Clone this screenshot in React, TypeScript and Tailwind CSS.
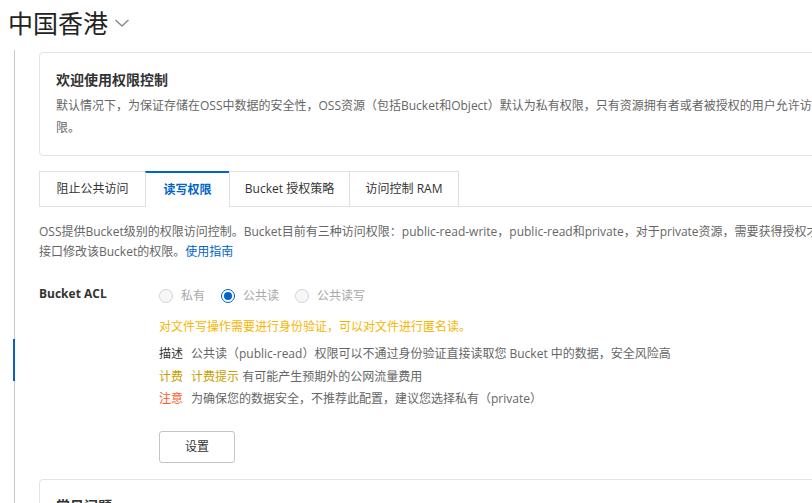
import React from "react";

const TABS = [
  { label: "阻止公共访问", width: "w-[106px]" },
  { label: "读写权限", width: "w-[84px]", active: true },
  { label: "Bucket 授权策略", width: "w-[120px]" },
  { label: "访问控制 RAM", width: "w-[110px]" },
];

const RADIOS = [
  { label: "私有", checked: false },
  { label: "公共读", checked: true },
  { label: "公共读写", checked: false },
];

function Radio({ label, checked }: { label: string; checked: boolean }) {
  return (
    <label className="flex items-center mr-[16px]">
      {checked ? (
        <span className="w-[14px] h-[14px] rounded-full border border-[#0064c8] bg-white flex items-center justify-center">
          <span className="w-[8px] h-[8px] rounded-full bg-[#0064c8]" />
        </span>
      ) : (
        <span className="w-[14px] h-[14px] rounded-full border border-[#cfd3d8] bg-[#f7f7f7]" />
      )}
      <span className="ml-[8px] text-[12px] text-[#a8a8a8]">{label}</span>
    </label>
  );
}

export default function App() {
  return (
    <div
      className="w-[812px] h-[503px] overflow-hidden bg-white flex flex-col text-[#333]"
      style={{ fontFamily: '"Open Sans", "Noto Sans CJK SC", sans-serif' }}
    >
      {/* region title */}
      <div className="h-[50px] shrink-0 flex items-start pl-[8px] pt-[4px]">
        <span
          className="text-[25px] leading-[36px] text-[#222]"
          style={{ fontFamily: '"Noto Sans CJK SC", sans-serif' }}
        >
          中国香港
        </span>
        <svg className="ml-[6px] mt-[14px]" width="16" height="10" viewBox="0 0 16 10">
          <polyline points="1.5,2 8,8 14.5,2" fill="none" stroke="#888" strokeWidth="1.4" />
        </svg>
      </div>

      <div className="flex flex-1 min-h-0">
        {/* side rail */}
        <div className="w-[15px] shrink-0 flex flex-col items-end">
          <div className="w-px h-[289px] bg-[#c5cad1]" />
          <div className="w-[2px] h-[42px] bg-[#0a5fc6]" />
          <div className="w-px flex-1 bg-[#c5cad1]" />
        </div>

        <div className="pl-[24px] w-[1000px] shrink-0">
          {/* intro card */}
          <div className="mt-[2px] border border-[#e3e3e3] rounded-[4px] pt-[16px] pb-[16px] px-[16px]">
            <div className="text-[14px] leading-[22px] font-bold text-[#333]">欢迎使用权限控制</div>
            <div className="mt-[4px] text-[12px] leading-[22px] text-[#666]">
              <div className="whitespace-nowrap">
                默认情况下，为保证存储在OSS中数据的安全性，OSS资源（包括Bucket和Object）默认为私有权限，只有资源拥有者或者被授权的用户允许访问。如果要允许匿名用户访问，请设置相应的权
              </div>
              <div>限。</div>
            </div>
          </div>

          {/* tabs */}
          <div className="mt-[15px] flex border-b border-[#e0e0e0] w-[773px]">
            {TABS.map((t, i) =>
              t.active ? (
                <div
                  key={t.label}
                  className={`${t.width} h-[36px] -mb-px flex items-center justify-center bg-white border-t-2 border-t-[#0064c8] border-l border-l-[#e0e0e0] text-[12px] font-bold text-[#0064c8]`}
                >
                  {t.label}
                </div>
              ) : (
                <div
                  key={t.label}
                  className={`${t.width} h-[35px] flex items-center justify-center border-t border-l border-[#e0e0e0] ${
                    i === TABS.length - 1 ? "border-r" : ""
                  } text-[12px] text-[#333]`}
                >
                  {t.label}
                </div>
              )
            )}
          </div>

          {/* description */}
          <div className="mt-[15px] text-[12px] leading-[20px] text-[#666]">
            <div className="whitespace-nowrap">
              OSS提供Bucket级别的权限访问控制。Bucket目前有三种访问权限：public-read-write，public-read和private，对于private资源，需要获得授权才能访问，您可以通过控制台或API
            </div>
            <div>
              接口修改该Bucket的权限。<span className="text-[#0064c8]">使用指南</span>
            </div>
          </div>

          {/* ACL form */}
          <div className="mt-[22px] flex">
            <div className="w-[120px] shrink-0 text-[12px] leading-[20px] font-bold text-[#333]">Bucket ACL</div>
            <div className="flex flex-col">
              <div className="flex items-center h-[20px] mt-[2px]">
                {RADIOS.map((r) => (
                  <Radio key={r.label} label={r.label} checked={r.checked} />
                ))}
              </div>
              <div className="mt-[11px] text-[12px] leading-[20px] text-[#f7b500]">
                对文件写操作需要进行身份验证，可以对文件进行匿名读。
              </div>
              <div className="mt-[6px] text-[12px] leading-[22.5px] text-[#666]">
                <div>
                  <span className="text-[#333] mr-[8px]">描述</span>
                  公共读（public-read）权限可以不通过身份验证直接读取您 Bucket 中的数据，安全风险高
                </div>
                <div>
                  <span className="text-[#c9a100] mr-[8px]">计费</span>
                  <span className="text-[#c9a100]">计费提示</span> 有可能产生预期外的公网流量费用
                </div>
                <div>
                  <span className="text-[#ff5a1f] mr-[8px]">注意</span>
                  为确保您的数据安全，不推荐此配置，建议您选择私有（private）
                </div>
              </div>
              <button className="mt-[20px] w-[76px] h-[32px] border border-[#c4c4c4] rounded-[3px] bg-white text-[12px] text-[#333]">
                设置
              </button>
            </div>
          </div>

          {/* FAQ card */}
          <div className="mt-[16px] border border-[#e3e3e3] rounded-[4px] pt-[15px] px-[16px] h-[80px]">
            <div className="text-[14px] leading-[22px] font-bold text-[#333]">常见问题</div>
          </div>
        </div>
      </div>
    </div>
  );
}
